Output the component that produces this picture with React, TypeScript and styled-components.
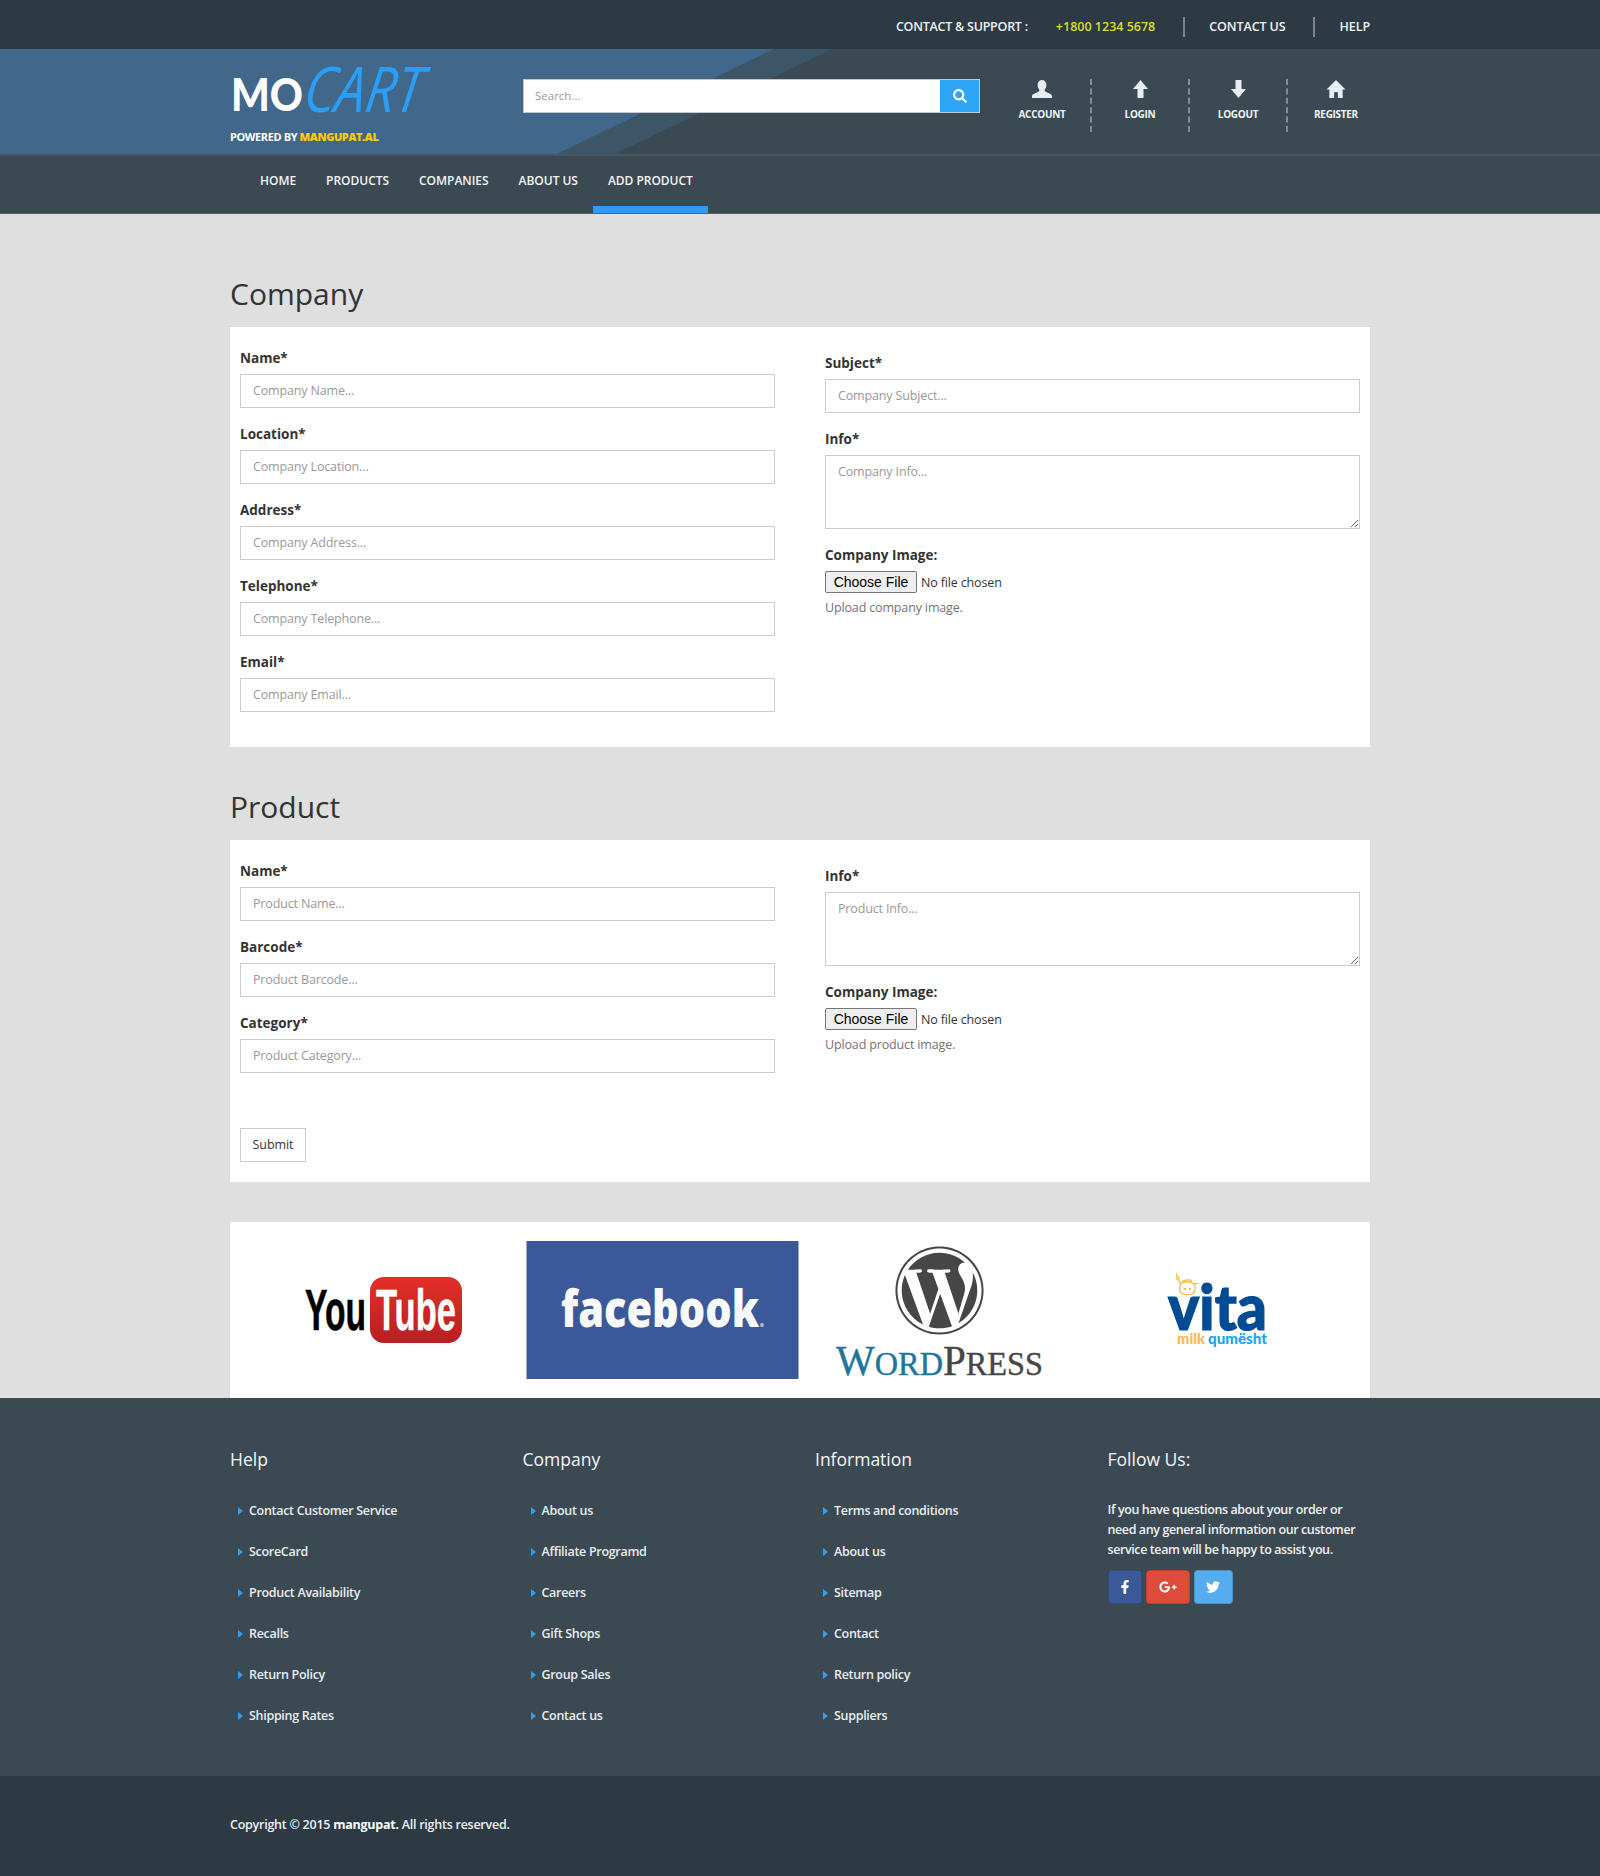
import React from "react";
import styled, { createGlobalStyle } from "styled-components";
import { FaSearch, FaFacebookF, FaGooglePlusG, FaTwitter, FaWordpress } from "react-icons/fa";

const Global = createGlobalStyle`
  * { box-sizing: border-box; }
  html, body { margin: 0; padding: 0; }
  body { background: #dfdfdf; font-family: "Open Sans", "Liberation Sans", sans-serif; color: #333; }
`;

const Container = styled.div`
  width: 1140px;
  margin: 0 auto;
`;

const TopBar = styled.div`
  height: 49px;
  background: #2d3a44;
`;
const TopInner = styled(Container)`
  height: 49px;
  padding-top: 5px;
  display: flex;
  align-items: center;
  justify-content: flex-end;
  font-size: 12.5px;
  font-weight: 600;
  line-height: 20px;
  letter-spacing: -0.1px;
  color: #eef2f5;
`;
const TopLabel = styled.span`
  margin-right: 28px;
  letter-spacing: -0.25px;
`;
const TopPhone = styled.span`
  color: #dcdc2a;
  margin-right: 28px;
  letter-spacing: 0;
`;
const TopLink = styled.span<{ $first?: boolean }>`
  height: 20px;
  border-left: 2px solid #7d848b;
  padding-left: ${(p) => (p.$first ? 24 : 25)}px;
  margin-left: ${(p) => (p.$first ? 0 : 27)}px;
`;

const Header = styled.header`
  position: relative;
  height: 107px;
  background: #3b4953;
  border-bottom: 2px solid #465661;
  overflow: hidden;
  &::before, &::after {
    content: "";
    position: absolute;
    inset: 0;
  }
  &::before {
    background: #3c5567;
    clip-path: polygon(0 0, 832px 0, 615px 100%, 0 100%);
  }
  &::after {
    background: #41678a;
    clip-path: polygon(0 0, 774px 0, 557px 100%, 0 100%);
  }
`;
const HeaderInner = styled(Container)`
  position: relative;
  z-index: 1;
  height: 105px;
  display: flex;
`;
const Brand = styled.div`
  width: 293px;
  flex: none;
  padding-top: 14px;
`;
const LogoSvg = styled.svg`
  display: block;
  width: 210px;
  height: 54px;
  overflow: visible;
`;
const Powered = styled.div`
  margin-top: 12px;
  font-size: 11px;
  font-weight: 700;
  letter-spacing: -0.4px;
  line-height: 16px;
  color: #fff;
  b { color: #fc0; }
`;
const SearchBox = styled.div`
  margin-top: 30px;
  width: 457px;
  flex: none;
  height: 34px;
  display: flex;
  border: 1px solid #c8c8c8;
  background: #fff;
`;
const SearchInput = styled.input`
  flex: 1;
  border: 0;
  outline: 0;
  padding: 0 11px 2px;
  font: 11.5px "Open Sans", sans-serif;
  &::placeholder { color: #999; }
`;
const SearchBtn = styled.div`
  width: 39px;
  background: #2ca5f7;
  color: #fff;
  display: flex;
  align-items: center;
  justify-content: center;
  font-size: 14px;
`;
const Actions = styled.div`
  margin-top: 30px;
  margin-left: 14px;
  flex: none;
  display: flex;
  height: 53px;
`;
const Action = styled.div<{ $last?: boolean }>`
  width: 98px;
  height: 53px;
  display: flex;
  flex-direction: column;
  align-items: center;
  border-right: 2px dashed ${(p) => (p.$last ? "transparent" : "#858b90")};
`;
const ActionIcon = styled.svg`
  display: block;
  height: 18px;
  margin-top: 1px;
  fill: #e6edf3;
`;
const ActionLabel = styled.span`
  margin-top: 9px;
  font-size: 10px;
  font-weight: 700;
  letter-spacing: -0.3px;
  line-height: 14px;
  color: #f2f5f7;
`;

const Nav = styled.nav`
  height: 58px;
  background: #3b4953;
  border-bottom: 1px solid #565f66;
`;
const NavInner = styled(Container)`
  display: flex;
  padding-left: 15px;
`;
const NavItem = styled.div<{ $active?: boolean }>`
  height: 57px;
  padding: 0 15px;
  line-height: 50px;
  font-size: 12px;
  font-weight: 600;
  letter-spacing: -0.03px;
  color: #f3f5f7;
  border-bottom: 7px solid ${(p) => (p.$active ? "#3398f3" : "transparent")};
`;

const Section = styled(Container)``;
const Heading = styled.h2<{ $top: number; $bottom: number }>`
  margin: ${(p) => p.$top}px 0 ${(p) => p.$bottom}px;
  font-size: 30px;
  font-weight: 400;
  line-height: 50px;
  height: 50px;
  color: #333;
`;
const Panel = styled.div<{ $height: number }>`
  height: ${(p) => p.$height}px;
  background: #fff;
  padding: 21px 10px 0;
  display: grid;
  grid-template-columns: 535px 535px;
  column-gap: 50px;
`;
const Column = styled.div<{ $offset?: boolean }>`
  padding-top: ${(p) => (p.$offset ? 5 : 0)}px;
`;
const Field = styled.div`
  margin-bottom: 16px;
`;
const Label = styled.label`
  display: block;
  height: 20px;
  line-height: 20px;
  margin-bottom: 6px;
  font-size: 13.5px;
  font-weight: 700;
  color: #333;
`;
const TextInput = styled.input`
  display: block;
  width: 100%;
  height: 34px;
  border: 1px solid #ccc;
  padding: 0 12px 2px;
  font: 12.5px "Open Sans", sans-serif;
  letter-spacing: -0.15px;
  &::placeholder { color: #999; }
`;
const TextArea = styled.textarea`
  display: block;
  width: 100%;
  height: 74px;
  border: 1px solid #ccc;
  padding: 7px 12px;
  font: 12.5px/18px "Open Sans", sans-serif;
  letter-spacing: -0.15px;
  &::placeholder { color: #999; }
`;
const FileInput = styled.input`
  display: block;
  height: 22px;
  font: 12.5px "Open Sans", sans-serif;
  letter-spacing: -0.15px;
  color: #333;
  &::file-selector-button {
    height: 22px;
    width: 92px;
    font: 14px "Liberation Sans", sans-serif;
    letter-spacing: 0;
    background: #efefef;
    border: 1px solid #767676;
    border-radius: 2px;
    margin-right: 4px;
    padding: 0;
  }
`;
const Help = styled.p`
  margin: 6px 0 0;
  font-size: 12.5px;
  letter-spacing: -0.15px;
  line-height: 18px;
  color: #737373;
`;
const Submit = styled.button`
  display: block;
  margin-top: 55px;
  width: 66px;
  height: 34px;
  background: #fff;
  border: 1px solid #ccc;
  font: 12.5px "Open Sans", sans-serif;
  letter-spacing: -0.1px;
  color: #333;
  padding: 0 0 2px;
`;

const LogoBand = styled(Container)`
  margin-top: 40px;
  height: 176px;
  background: #fff;
  padding: 19px 15px 0;
  display: grid;
  grid-template-columns: repeat(4, 277.5px);
`;
const LogoCell = styled.svg`
  display: block;
  width: 277.5px;
  height: 138px;
`;

const Footer = styled.footer`
  height: 378px;
  background: #3b4953;
  color: #eef1f3;
`;
const FooterGrid = styled(Container)`
  display: grid;
  grid-template-columns: repeat(4, 292.5px);
  padding-top: 46px;
`;
const FooterTitle = styled.h4`
  margin: 0 0 27px;
  font-size: 17.5px;
  font-weight: 400;
  line-height: 30px;
  color: #f4f6f7;
`;
const FooterList = styled.ul`
  list-style: none;
  margin: 0;
  padding: 0 0 0 8px;
`;
const FooterLink = styled.li`
  height: 41px;
  line-height: 20px;
  font-size: 12.5px;
  font-weight: 600;
  letter-spacing: -0.3px;
  display: flex;
  color: #e9edf0;
`;
const Caret = styled.span`
  flex: none;
  width: 0;
  height: 0;
  margin: 6px 6px 0 0;
  border-left: 5px solid #2f9ff2;
  border-top: 4.5px solid transparent;
  border-bottom: 4.5px solid transparent;
`;
const FollowText = styled.p`
  margin: -1px 0 10px;
  width: 255px;
  font-size: 12.5px;
  font-weight: 600;
  letter-spacing: -0.4px;
  line-height: 20px;
`;
const SocialRow = styled.div`
  display: flex;
  gap: 4px;
`;
const Social = styled.div<{ $bg: string; $w: number }>`
  width: ${(p) => p.$w}px;
  height: 34px;
  border-radius: 4px;
  background: ${(p) => p.$bg};
  border: 1px solid rgba(0, 0, 0, 0.15);
  color: #fff;
  display: flex;
  align-items: center;
  justify-content: center;
  font-size: 14px;
`;
const BottomBar = styled.div`
  height: 100px;
  background: #2d3a44;
`;
const Copy = styled(Container)`
  line-height: 98px;
  font-size: 12.5px;
  font-weight: 600;
  letter-spacing: -0.25px;
  color: #eef1f3;
  b { color: #fff; font-weight: 700; }
`;

type F = { label: string; ph: string };
const companyLeft: F[] = [
  { label: "Name*", ph: "Company Name..." },
  { label: "Location*", ph: "Company Location..." },
  { label: "Address*", ph: "Company Address..." },
  { label: "Telephone*", ph: "Company Telephone..." },
  { label: "Email*", ph: "Company Email..." },
];
const productLeft: F[] = [
  { label: "Name*", ph: "Product Name..." },
  { label: "Barcode*", ph: "Product Barcode..." },
  { label: "Category*", ph: "Product Category..." },
];
const footerCols = [
  { title: "Help", links: ["Contact Customer Service", "ScoreCard", "Product Availability", "Recalls", "Return Policy", "Shipping Rates"] },
  { title: "Company", links: ["About us", "Affiliate Programd", "Careers", "Gift Shops", "Group Sales", "Contact us"] },
  { title: "Information", links: ["Terms and conditions", "About us", "Sitemap", "Contact", "Return policy", "Suppliers"] },
];

const InputField = ({ label, ph }: F) => (
  <Field>
    <Label>{label}</Label>
    <TextInput placeholder={ph} />
  </Field>
);
const InfoField = ({ ph }: { ph: string }) => (
  <Field>
    <Label>Info*</Label>
    <TextArea placeholder={ph} />
  </Field>
);
const ImageField = ({ help }: { help: string }) => (
  <div>
    <Label>Company Image:</Label>
    <FileInput type="file" />
    <Help>{help}</Help>
  </div>
);

const UserIcon = () => (
  <ActionIcon viewBox="0 0 20 18" width="20">
    <path d="M10 0c2.6 0 4.4 2 4.4 5 0 2-.8 3.6-1.7 4.6-.5 1.4.6 2.4 3 3.2 2.4.8 4.3 1.8 4.3 3.2v2H0v-2c0-1.4 1.9-2.4 4.3-3.2 2.4-.8 3.5-1.8 3-3.2C6.4 8.6 5.6 7 5.6 5 5.6 2 7.4 0 10 0z" />
  </ActionIcon>
);
const UpIcon = () => (
  <ActionIcon viewBox="0 0 15 18" width="15">
    <polygon points="7.5,0 15,9 10.5,9 10.5,18 4.5,18 4.5,9 0,9" />
  </ActionIcon>
);
const DownIcon = () => (
  <ActionIcon viewBox="0 0 15 18" width="15">
    <polygon points="7.5,18 15,9 10.5,9 10.5,0 4.5,0 4.5,9 0,9" />
  </ActionIcon>
);
const HomeIcon = () => (
  <ActionIcon viewBox="0 0 20 19" width="20">
    <path d="M10 0 20 10H17V19H12V13H8V19H3V10H0Z" />
  </ActionIcon>
);

const YouTubeLogo = () => (
  <LogoCell viewBox="0 0 277.5 138">
    <defs>
      <linearGradient id="yt" x1="0" y1="0" x2="0" y2="1">
        <stop offset="0" stopColor="#e32f27" />
        <stop offset="1" stopColor="#b91f22" />
      </linearGradient>
    </defs>
    <rect x="125" y="36" width="92" height="66" rx="14" fill="url(#yt)" />
    <text x="60" y="89" fontFamily="'Liberation Sans', sans-serif" fontWeight="700" fontSize="58" textLength="61" lengthAdjust="spacingAndGlyphs" fill="#000" stroke="#000" strokeWidth="0.6">You</text>
    <text x="131" y="89" fontFamily="'Liberation Sans', sans-serif" fontWeight="700" fontSize="58" textLength="80" lengthAdjust="spacingAndGlyphs" fill="#fff" stroke="#fff" strokeWidth="0.4">Tube</text>
  </LogoCell>
);
const FacebookLogo = () => (
  <LogoCell viewBox="0 0 277.5 138">
    <rect x="3.5" y="0" width="272" height="138" fill="#3b5998" />
    <text x="38" y="86" fontFamily="'Open Sans', sans-serif" fontWeight="800" fontSize="52" textLength="198" lengthAdjust="spacingAndGlyphs" fill="#f8f9fb">facebook</text>
    <circle cx="239" cy="84" r="2" fill="#a9b8d4" />
  </LogoCell>
);
const WordPressLogo = () => (
  <LogoCell viewBox="0 0 277.5 138">
    <FaWordpress x="94" y="4" size={91} fill="#464646" />
    <text x="36" y="134" fontFamily="'Liberation Serif', serif" fontSize="42" fill="#21759b" stroke="#21759b" strokeWidth="0.4" textLength="207" lengthAdjust="spacingAndGlyphs">
      W<tspan fontSize="33">ORD</tspan><tspan fontSize="42" fill="#464646" stroke="#464646">P</tspan><tspan fontSize="33" fill="#464646" stroke="#464646">RESS</tspan>
    </text>
  </LogoCell>
);
const VitaLogo = () => (
  <LogoCell viewBox="0 0 277.5 138">
    <g fill="none" stroke="#fdb94d" strokeWidth="1.3">
      <path d="M103 43c2-3 10-3 13 0 2 3 1 9-2 10-3 1-9 1-11-1-2-2-2-6 0-9z" />
      <path d="M103 43c-2-2-3-4-2-8M100 39c-1 0-2-3-1-7M116 43c2-1 3-1 4 0M104 41c2-2 7-3 10-1" />
      <circle cx="107" cy="48" r=".6" />
      <circle cx="112" cy="48" r=".6" />
    </g>
    <text x="90" y="89" fontFamily="Lato, sans-serif" fontWeight="900" fontSize="62" textLength="99" lengthAdjust="spacingAndGlyphs" fill="#004b93" stroke="#004b93" strokeWidth="1.2">vita</text>
    <text x="99" y="103" fontFamily="Lato, sans-serif" fontWeight="900" fontSize="15" textLength="28" lengthAdjust="spacingAndGlyphs" fill="#fdb94d">milk</text>
    <text x="130" y="103" fontFamily="Lato, sans-serif" fontWeight="900" fontSize="15" textLength="59" lengthAdjust="spacingAndGlyphs" fill="#1aa5ec">qumësht</text>
  </LogoCell>
);

export default function App() {
  return (
    <>
      <Global />
      <TopBar>
        <TopInner>
          <TopLabel>CONTACT &amp; SUPPORT :</TopLabel>
          <TopPhone>+1800 1234 5678</TopPhone>
          <TopLink $first>CONTACT US</TopLink>
          <TopLink>HELP</TopLink>
        </TopInner>
      </TopBar>
      <Header>
        <HeaderInner>
          <Brand>
            <LogoSvg viewBox="0 0 210 54">
              <text x="1" y="48" fontFamily="Lato, sans-serif" fontWeight="900" fontSize="46" textLength="72" lengthAdjust="spacingAndGlyphs" fill="#fff">MO</text>
              <text x="72" y="49" transform="skewX(-8) translate(7 0)" fontFamily="'Open Sans', sans-serif" fontWeight="400" fontStyle="italic" fontSize="63" textLength="118" lengthAdjust="spacingAndGlyphs" fill="#2b9df4">CART</text>
            </LogoSvg>
            <Powered>POWERED BY <b>MANGUPAT.AL</b></Powered>
          </Brand>
          <SearchBox>
            <SearchInput placeholder="Search..." />
            <SearchBtn><FaSearch /></SearchBtn>
          </SearchBox>
          <Actions>
            <Action><UserIcon /><ActionLabel>ACCOUNT</ActionLabel></Action>
            <Action><UpIcon /><ActionLabel>LOGIN</ActionLabel></Action>
            <Action><DownIcon /><ActionLabel>LOGOUT</ActionLabel></Action>
            <Action $last><HomeIcon /><ActionLabel>REGISTER</ActionLabel></Action>
          </Actions>
        </HeaderInner>
      </Header>
      <Nav>
        <NavInner>
          <NavItem>HOME</NavItem>
          <NavItem>PRODUCTS</NavItem>
          <NavItem>COMPANIES</NavItem>
          <NavItem>ABOUT US</NavItem>
          <NavItem $active>ADD PRODUCT</NavItem>
        </NavInner>
      </Nav>
      <Section>
        <Heading $top={55} $bottom={8}>Company</Heading>
        <Panel $height={420}>
          <Column>{companyLeft.map((f) => <InputField key={f.label} {...f} />)}</Column>
          <Column $offset>
            <InputField label="Subject*" ph="Company Subject..." />
            <InfoField ph="Company Info..." />
            <ImageField help="Upload company image." />
          </Column>
        </Panel>
        <Heading $top={35} $bottom={8}>Product</Heading>
        <Panel $height={342}>
          <Column>
            {productLeft.map((f) => <InputField key={f.label} {...f} />)}
            <Submit>Submit</Submit>
          </Column>
          <Column $offset>
            <InfoField ph="Product Info..." />
            <ImageField help="Upload product image." />
          </Column>
        </Panel>
      </Section>
      <LogoBand>
        <YouTubeLogo />
        <FacebookLogo />
        <WordPressLogo />
        <VitaLogo />
      </LogoBand>
      <Footer>
        <FooterGrid>
          {footerCols.map((c) => (
            <div key={c.title}>
              <FooterTitle>{c.title}</FooterTitle>
              <FooterList>
                {c.links.map((l) => (
                  <FooterLink key={l}><Caret />{l}</FooterLink>
                ))}
              </FooterList>
            </div>
          ))}
          <div>
            <FooterTitle>Follow Us:</FooterTitle>
            <FollowText>If you have questions about your order or need any general information our customer service team will be happy to assist you.</FollowText>
            <SocialRow>
              <Social $bg="#3b5998" $w={34}><FaFacebookF /></Social>
              <Social $bg="#dd4b39" $w={44}><FaGooglePlusG size={18} /></Social>
              <Social $bg="#55acee" $w={39}><FaTwitter /></Social>
            </SocialRow>
          </div>
        </FooterGrid>
      </Footer>
      <BottomBar>
        <Copy>Copyright © 2015 <b>mangupat.</b> All rights reserved.</Copy>
      </BottomBar>
    </>
  );
}
